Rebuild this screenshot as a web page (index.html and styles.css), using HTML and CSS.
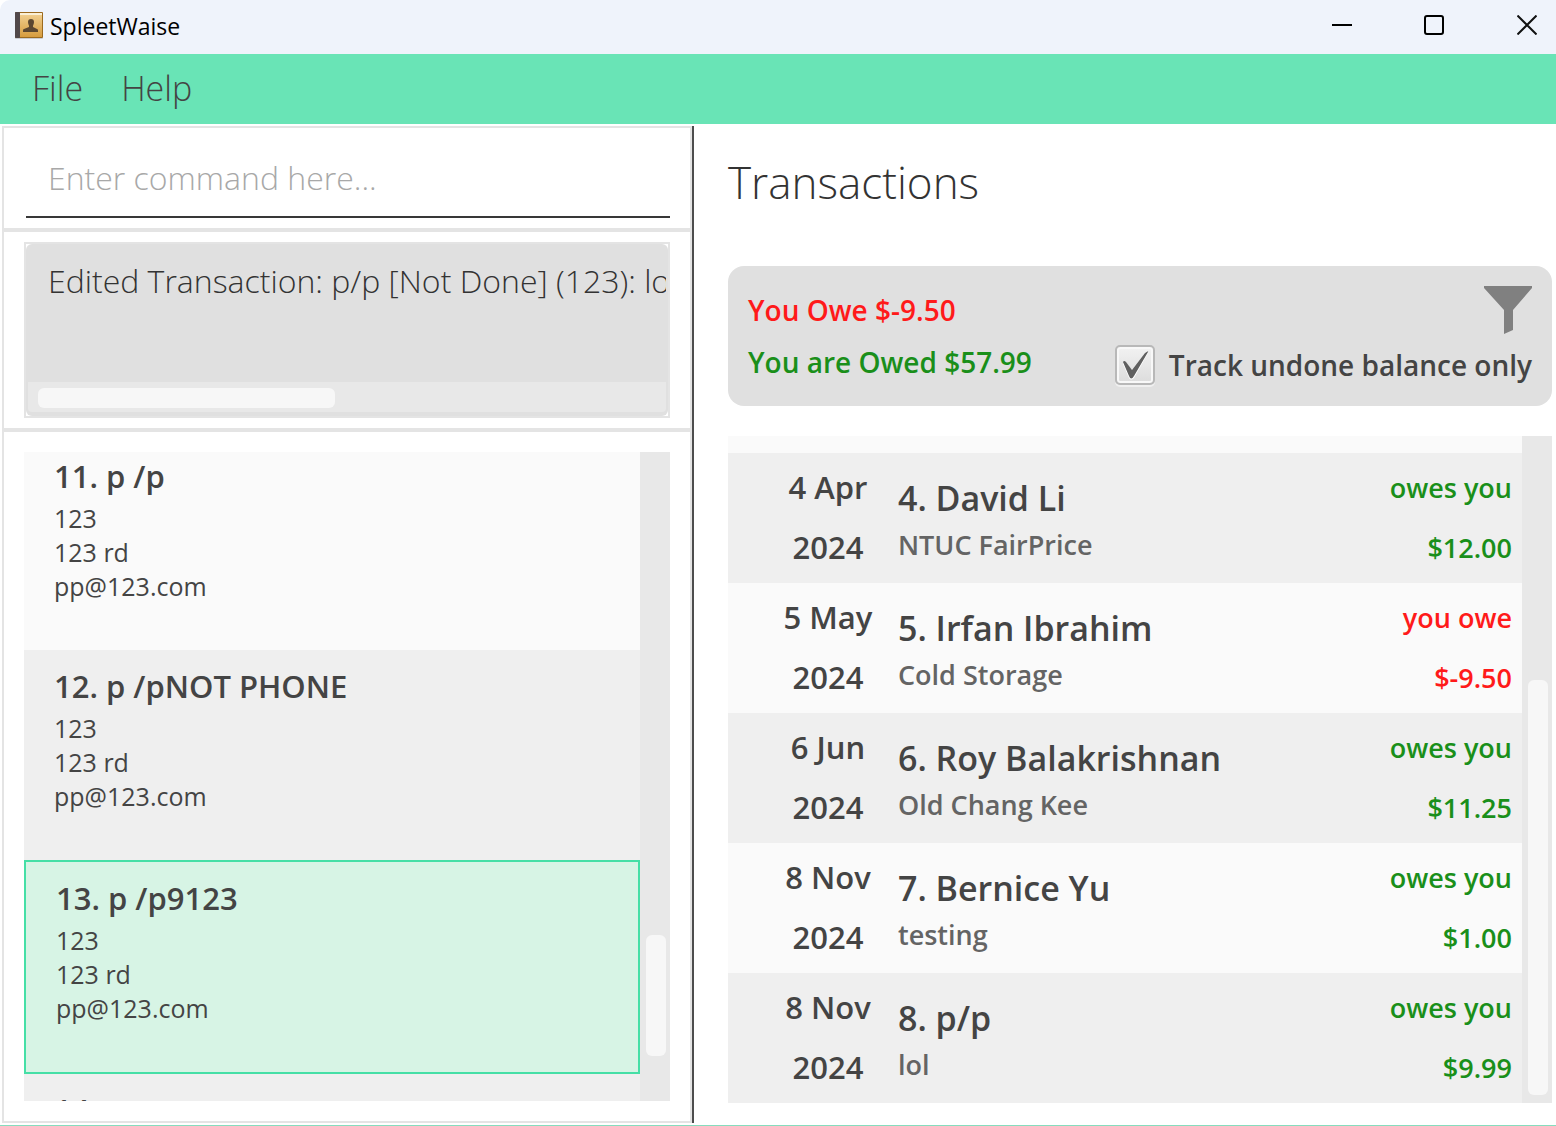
FILE: index.html
```html
<!DOCTYPE html>
<html lang="en">
<head>
<meta charset="utf-8">
<title>SpleetWaise</title>
<link rel="stylesheet" href="styles.css">
</head>
<body>
<div class="window">
  <header class="titlebar">
    <svg class="app-icon" width="30" height="30" viewBox="0 0 30 30" aria-hidden="true">
      <defs>
        <linearGradient id="cover" x1="0" y1="0" x2="0" y2="1">
          <stop offset="0" stop-color="#f0cd8c"/>
          <stop offset="1" stop-color="#d69c3f"/>
        </linearGradient>
      </defs>
      <rect x="1" y="26" width="28" height="2" rx="1" fill="#c9ccd2"/>
      <rect x="1" y="1" width="28" height="26" rx="1" fill="#9c6a1e"/>
      <rect x="5" y="2" width="23" height="2" fill="#fbf0d6"/>
      <rect x="5" y="4" width="23" height="22" fill="url(#cover)"/>
      <rect x="1" y="1" width="5" height="26" rx="1" fill="#51484a"/>
      <path d="M17 8c-2 0-3 1-3 3 0 2 1 3 1 4v1l-5 2c-1 0-1 1-1 3h15c0-2 0-3-1-3l-4-2v-1c0-1 1-2 1-4 0-2-1-3-3-3z" fill="#5c4730"/>
    </svg>
    <h1 class="app-name">SpleetWaise</h1>
    <div class="window-buttons">
      <button class="window-button" aria-label="Minimize"><svg width="20" height="20"><path d="M0 10h20" stroke="#000" stroke-width="2"/></svg></button>
      <button class="window-button" aria-label="Maximize"><svg width="20" height="20"><rect x="1" y="1" width="18" height="18" rx="2" fill="none" stroke="#000" stroke-width="2"/></svg></button>
      <button class="window-button" aria-label="Close"><svg width="20" height="20"><path d="M.5.5l19 19M19.5.5l-19 19" stroke="#111" stroke-width="2"/></svg></button>
    </div>
  </header>
  <nav class="menubar">
    <button class="menu">File</button>
    <button class="menu">Help</button>
  </nav>
  <main class="content">
    <section class="side">
      <div class="pane command-pane">
        <input class="command" type="text" aria-label="Command" placeholder="Enter command here...">
      </div>
      <div class="pane result-pane">
        <div class="result-frame">
          <div class="result">
            <textarea class="result-text" aria-label="Result" wrap="off" readonly>Edited Transaction: p/p [Not Done] (123): lol</textarea>
            <div class="track-x"><div class="thumb"></div></div>
          </div>
        </div>
      </div>
      <div class="pane list-pane">
        <ul class="people">
          <li class="person person-cut">
            <h2 class="person-name">11. p /p</h2>
            <p class="person-line">123</p>
            <p class="person-line">123 rd</p>
            <p class="person-line">pp@123.com</p>
          </li>
          <li class="person person-even">
            <h2 class="person-name">12. p /pNOT PHONE</h2>
            <p class="person-line">123</p>
            <p class="person-line">123 rd</p>
            <p class="person-line">pp@123.com</p>
          </li>
          <li class="person person-selected">
            <h2 class="person-name">13. p /p9123</h2>
            <p class="person-line">123</p>
            <p class="person-line">123 rd</p>
            <p class="person-line">pp@123.com</p>
          </li>
          <li class="person person-even">
            <h2 class="person-name">14.</h2>
          </li>
        </ul>
        <div class="track-y people-track"><div class="thumb"></div></div>
      </div>
    </section>
    <section class="transactions">
      <h2 class="heading">Transactions</h2>
      <div class="summary">
        <div class="balances">
          <p class="balance owe">You Owe $-9.50</p>
          <p class="balance owed">You are Owed $57.99</p>
        </div>
        <div class="filters">
          <button class="filter" aria-label="Filter"><svg width="48" height="48" viewBox="0 0 48 48"><path d="M0 0h48v2L29 24v20l-9 4V24L0 2z" fill="#808080"/></svg></button>
          <label class="track-option"><input class="tick" type="checkbox" checked>Track undone balance only</label>
        </div>
      </div>
      <div class="ledger">
        <ul class="entries">
          <li class="entry-cut"></li>
          <li class="entry entry-even">
            <div class="date">4 Apr<br>2024</div>
            <div class="detail"><h3 class="who">4. David Li</h3><p class="what">NTUC FairPrice</p></div>
            <div class="amount owed">owes you<br>$12.00</div>
          </li>
          <li class="entry">
            <div class="date">5 May<br>2024</div>
            <div class="detail"><h3 class="who">5. Irfan Ibrahim</h3><p class="what">Cold Storage</p></div>
            <div class="amount owe">you owe<br>$-9.50</div>
          </li>
          <li class="entry entry-even">
            <div class="date">6 Jun<br>2024</div>
            <div class="detail"><h3 class="who">6. Roy Balakrishnan</h3><p class="what">Old Chang Kee</p></div>
            <div class="amount owed">owes you<br>$11.25</div>
          </li>
          <li class="entry">
            <div class="date">8 Nov<br>2024</div>
            <div class="detail"><h3 class="who">7. Bernice Yu</h3><p class="what">testing</p></div>
            <div class="amount owed">owes you<br>$1.00</div>
          </li>
          <li class="entry entry-even">
            <div class="date">8 Nov<br>2024</div>
            <div class="detail"><h3 class="who">8. p/p</h3><p class="what">lol</p></div>
            <div class="amount owed">owes you<br>$9.99</div>
          </li>
        </ul>
        <div class="track-y ledger-track"><div class="thumb"></div></div>
      </div>
    </section>
  </main>
</div>
</body>
</html>
```
FILE: styles.css
```css
* { box-sizing: border-box; }

body {
  margin: 0;
  font-family: "Open Sans", "Noto Sans", sans-serif;
  color: #444;
  background: #fff;
}

h1, h2, h3, p, ul { margin: 0; padding: 0; font-weight: inherit; }
ul { list-style: none; }
button, input, textarea { font: inherit; color: inherit; }
button { padding: 0; border: 0; background: none; }
svg { display: block; }

.window {
  display: flex;
  flex-direction: column;
  height: 100vh;
  border-bottom: 1px solid #86dcbd;
}

/* Title bar */
.titlebar {
  display: flex;
  flex: none;
  align-items: center;
  gap: 6px;
  height: 54px;
  padding: 0 0 2px 14px;
  background: #eff3fb;
  border-top-left-radius: 10px;
}
.app-name { font-size: 23px; line-height: 30px; color: #000; }
.window-buttons { display: flex; margin-left: auto; }
.window-button {
  display: flex;
  align-items: center;
  justify-content: center;
  width: 92px;
  height: 50px;
  padding-bottom: 2px;
}
.window-button:last-child { width: 94px; margin-right: -18px; }

/* Menu bar */
.menubar {
  display: flex;
  flex: none;
  gap: 38px;
  height: 70px;
  padding: 0 32px 2px;
  background: #69e4b6;
}
.menu { font-size: 34px; font-weight: 300; }

.content { display: flex; flex: 1; min-height: 0; padding: 2px 0; }

/* Left side */
.side {
  display: flex;
  flex-direction: column;
  flex: 0 0 44.6%;
  padding-left: 2px;
  border-right: 2px solid #4d4d4d;
}
.pane { border: 2px solid #e4e4e4; padding: 0 20px; }

.command-pane { flex: none; height: 104px; padding-left: 22px; }
.command {
  width: 100%;
  height: 90px;
  padding: 12px 22px 2px;
  border: 0;
  border-bottom: 2px solid #383838;
  outline: 0;
  background: transparent;
  font-size: 32px;
  font-weight: 300;
}
.command::placeholder { color: #a8a8a8; }

.result-pane { flex: none; height: 200px; padding-top: 10px; }
.result-frame { height: 176px; border: 2px solid #e4e4e4; }
.result {
  display: flex;
  flex-direction: column;
  height: 100%;
  padding: 2px 2px 4px;
  border-radius: 6px;
  background: #e0e0e0;
}
.result-text {
  flex: 1;
  width: 100%;
  min-height: 0;
  padding: 10px 20px;
  border: 0;
  outline: 0;
  resize: none;
  overflow: hidden;
  background: transparent;
  color: #333;
  font-size: 32px;
  line-height: 50px;
  font-weight: 300;
}
.track-x {
  flex: none;
  height: 30px;
  padding: 6px 10px 4px;
  border-radius: 0 0 4px 4px;
  background: #e8e8e8;
}
.track-x .thumb { width: 48%; height: 20px; }
.thumb { border-radius: 6px; background: #f7f7f7; }

.list-pane { display: flex; flex: 1; min-height: 0; padding-top: 20px; padding-bottom: 20px; }
.people { flex: 1; min-width: 0; overflow: hidden; background: #efefef; }
.person { padding: 15px 30px 47px; background: #fafafa; }
.person-cut { padding-top: 3px; }
.person-even { background: #efefef; }
.person-selected { border: 2px solid #45dfa6; background: #d7f4e5; }
.person-name { margin-bottom: 4px; font-size: 31px; line-height: 42px; font-weight: 600; }
.person-line { font-size: 25px; line-height: 34px; }

.track-y {
  display: flex;
  flex-direction: column;
  flex: none;
  width: 30px;
  padding: 0 4px 0 6px;
  background: #e8e8e8;
}
.people-track { justify-content: flex-end; padding-bottom: 45px; }
.people-track .thumb { height: 121px; }

/* Right side */
.transactions {
  display: flex;
  flex-direction: column;
  flex: 1;
  min-width: 0;
  padding: 20px 4px 20px 34px;
}
.heading { font-size: 44px; line-height: 72px; font-weight: 300; color: #333; }

.summary {
  display: flex;
  flex: none;
  justify-content: space-between;
  height: 140px;
  margin: 48px 0 30px;
  padding: 18px 20px;
  border-radius: 16px;
  background: #e0e0e0;
}
.balance { font-size: 28px; line-height: 52px; font-weight: 600; }
.owe { color: #ff1a1a; }
.owed { color: #1a8f1a; }

.filters { display: flex; flex-direction: column; align-items: flex-end; gap: 11px; padding-top: 2px; }
.track-option {
  display: flex;
  align-items: center;
  gap: 14px;
  font-size: 28px;
  line-height: 40px;
  font-weight: 600;
}
.tick {
  appearance: none;
  width: 40px;
  height: 40px;
  margin: 0;
  border: 2px solid #b8b8b8;
  border-radius: 5px;
  background:
    url("data:image/svg+xml,%3Csvg xmlns='http://www.w3.org/2000/svg' viewBox='0 0 36 36'%3E%3Cpath d='M6 17q1-3 3-1l6 7L29 5q3-2 2 1L17 31q-3 3-5 0z' fill='%23fff'/%3E%3Cpath d='M6 15q1-2 3 0l6 8L28 6q4-3 3-1L17 29q-3 5-5 0z' fill='%23606060'/%3E%3C/svg%3E") center / 36px 36px no-repeat,
    linear-gradient(#f2f2f2, #dcdcdc);
  box-shadow: inset 0 0 0 2px #f8f8f8, 0 2px 0 #f0f0f0;
}

.ledger { display: flex; flex: 1; min-height: 0; }
.entries {
  display: flex;
  flex-direction: column;
  justify-content: flex-end;
  flex: 1;
  min-width: 0;
  overflow: hidden;
  background: #fafafa;
}
.entry {
  display: flex;
  flex: none;
  gap: 20px;
  height: 130px;
  padding: 4px 10px 4px 50px;
  background: #fafafa;
}
.entry-cut { flex: 1; }
.entry-even { background: #efefef; }
.date { width: 100px; text-align: center; font-size: 31px; line-height: 60px; font-weight: 600; }
.detail { flex: 1; padding-top: 16px; }
.who { font-size: 34px; line-height: 50px; font-weight: 600; }
.what { font-size: 27px; line-height: 44px; font-weight: 600; color: #646464; }
.amount { padding-top: 1px; text-align: right; font-size: 27px; line-height: 60px; font-weight: 600; }

.ledger-track { justify-content: flex-end; padding-bottom: 8px; }
.ledger-track .thumb { height: 63%; }
```
